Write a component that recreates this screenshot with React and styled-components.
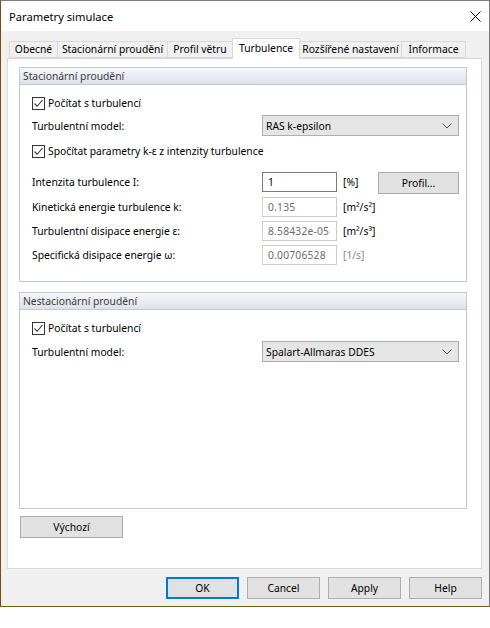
import React from 'react';
import styled, { createGlobalStyle } from 'styled-components';

const Global = createGlobalStyle`
  html, body { margin: 0; padding: 0; background: #ffffff; }
  body {
    font-family: "Noto Sans", "Liberation Sans", sans-serif;
    font-size: 10.3px;
    color: #000;
  }
  * { box-sizing: border-box; }
`;

const Window = styled.div`
  width: 490px;
  height: 607px;
  border: 1px solid #7d7d7d;
  border-left-color: #7a4b16;
  border-bottom-color: #6f5b1f;
  background: #f0f0f0;
  display: flex;
  flex-direction: column;
`;

const TitleBar = styled.div`
  height: 30px;
  background: #fff;
  display: flex;
  align-items: center;
  justify-content: space-between;
  padding-left: 8px;
  flex-shrink: 0;
`;

const Title = styled.span`
  font-size: 11.2px;
  color: #000;
`;

const CloseBtn = styled.div`
  width: 28px;
  height: 30px;
  display: flex;
  align-items: center;
  justify-content: center;
`;

const Body = styled.div`
  flex: 1;
  display: flex;
  flex-direction: column;
  padding: 7px 7px 0 6px;
`;

const TabStrip = styled.div`
  display: flex;
  align-items: flex-end;
  height: 20px;
  padding-left: 2px;
  position: relative;
  z-index: 1;
`;

const Tab = styled.div`
  width: ${p => p.$w}px;
  height: ${p => (p.$active ? 21 : 17)}px;
  margin-left: -1px;
  margin-bottom: ${p => (p.$active ? -1 : 0)}px;
  &:first-child { margin-left: 0; }
  border: 1px solid #d9d9d9;
  border-bottom: ${p => (p.$active ? 'none' : '1px solid #d9d9d9')};
  background: ${p => (p.$active ? '#fff' : '#f0f0f0')};
  display: flex;
  align-items: center;
  justify-content: center;
  padding-bottom: ${p => (p.$active ? 3 : 1)}px;
  white-space: nowrap;
  position: relative;
  z-index: ${p => (p.$active ? 2 : 1)};
`;

const Panel = styled.div`
  height: 511px;
  background: #fff;
  border: 1px solid #d9d9d9;
  padding: 8px 14px 0 11px;
  display: flex;
  flex-direction: column;
`;

const Group = styled.div`
  height: ${p => p.$h}px;
  margin-top: ${p => p.$mt || 0}px;
  border: 1px solid #c3c8d6;
  display: flex;
  flex-direction: column;
`;

const GroupHeader = styled.div`
  height: 17px;
  background: linear-gradient(#f6f7fa, #dde1ea);
  border-bottom: 1px solid #c3c8d6;
  padding-left: 3px;
  display: flex;
  align-items: center;
  color: #3c3c3c;
  white-space: nowrap;
`;

const GroupBody = styled.div`
  padding-left: 12px;
  display: flex;
  flex-direction: column;
`;

const Row = styled.div`
  display: flex;
  align-items: ${p => p.$align || 'center'};
  height: ${p => p.$h}px;
  margin-top: ${p => p.$mt}px;
  white-space: nowrap;
`;

const Label = styled.div`
  width: 230px;
  flex-shrink: 0;
  line-height: 20px;
  color: #000;
`;

const CheckWrap = styled.label`
  display: flex;
  align-items: center;
  gap: 3px;
  color: #000;
`;

const Box = styled.span`
  width: 13px;
  height: 13px;
  border: 1px solid #333;
  background: #fff;
  display: flex;
  align-items: center;
  justify-content: center;
`;

const Select = styled.div`
  width: 197px;
  height: 21px;
  background: #e5e5e5;
  border: 1px solid #adadad;
  display: flex;
  align-items: center;
  justify-content: space-between;
  padding: 0 6px 0 3px;
`;

const Input = styled.div`
  width: 75px;
  height: 20px;
  border: 1px solid ${p => (p.$disabled ? '#cccccc' : '#7a7a7a')};
  background: #fff;
  color: ${p => (p.$disabled ? '#6d6d6d' : '#000')};
  padding-left: 5px;
  display: flex;
  align-items: center;
  letter-spacing: ${p => (p.$disabled ? '0.2px' : '0')};
`;

const Unit = styled.div`
  margin-left: 6px;
  line-height: 20px;
  color: ${p => (p.$disabled ? '#8a8a8a' : '#000')};
  width: 35px;
`;

const Button = styled.div`
  width: ${p => p.$w}px;
  height: ${p => p.$h || 22}px;
  margin-left: ${p => p.$ml || 0}px;
  background: #e1e1e1;
  border: ${p => (p.$default ? '2px solid #0078d7' : '1px solid #adadad')};
  display: flex;
  align-items: center;
  justify-content: center;
  color: #000;
  flex-shrink: 0;
`;

const Footer = styled.div`
  display: flex;
  justify-content: flex-end;
  gap: 8px;
  margin-top: 8px;
`;

const Check = () => (
  <svg width="11" height="11" viewBox="0 0 11 11">
    <path d="M1.5 5.5 L4.2 8.3 L9.5 2" fill="none" stroke="#333" strokeWidth="1.1" />
  </svg>
);

const Chevron = () => (
  <svg width="10" height="6" viewBox="0 0 10 6">
    <path d="M0.5 0.5 L5 5 L9.5 0.5" fill="none" stroke="#555" strokeWidth="1" />
  </svg>
);

const CheckRow = ({ mt, children }) => (
  <Row $h={14} $mt={mt}>
    <CheckWrap>
      <Box><Check /></Box>
      {children}
    </CheckWrap>
  </Row>
);

const tabs = [
  ['Obecné', 49],
  ['Stacionární proudění', 111],
  ['Profil větru', 66],
  ['Turbulence', 68, true],
  ['Rozšířené nastavení', 103],
  ['Informace', 65],
];

export default function App() {
  return (
    <>
      <Global />
      <Window>
        <TitleBar>
          <Title>Parametry simulace</Title>
          <CloseBtn>
            <svg width="11" height="11" viewBox="0 0 11 11">
              <path d="M0.5 0.5 L10.5 10.5 M10.5 0.5 L0.5 10.5" stroke="#000" strokeWidth="1" />
            </svg>
          </CloseBtn>
        </TitleBar>
        <Body>
          <TabStrip>
            {tabs.map(([t, w, a]) => (
              <Tab key={t} $w={w} $active={a}>{t}</Tab>
            ))}
          </TabStrip>
          <Panel>
            <Group $h={215}>
              <GroupHeader>Stacionární proudění</GroupHeader>
              <GroupBody>
                <CheckRow mt={11}>Počítat s turbulencí</CheckRow>
                <Row $h={21} $mt={5}>
                  <Label>Turbulentní model:</Label>
                  <Select>RAS k-epsilon<Chevron /></Select>
                </Row>
                <CheckRow mt={8}>Spočítat parametry k-ε z intenzity turbulence</CheckRow>
                <Row $h={22} $mt={14} $align="flex-start">
                  <Label>Intenzita turbulence I:</Label>
                  <Input>1</Input>
                  <Unit>[%]</Unit>
                  <Button $w={81} $h={22}>Profil...</Button>
                </Row>
                <Row $h={20} $mt={3}>
                  <Label>Kinetická energie turbulence k:</Label>
                  <Input $disabled>0.135</Input>
                  <Unit>[m²/s²]</Unit>
                </Row>
                <Row $h={20} $mt={4}>
                  <Label>Turbulentní disipace energie ε:</Label>
                  <Input $disabled>8.58432e-05</Input>
                  <Unit>[m²/s³]</Unit>
                </Row>
                <Row $h={20} $mt={4}>
                  <Label>Specifická disipace energie ω:</Label>
                  <Input $disabled>0.00706528</Input>
                  <Unit $disabled>[1/s]</Unit>
                </Row>
              </GroupBody>
            </Group>
            <Group $h={217} $mt={10}>
              <GroupHeader>Nestacionární proudění</GroupHeader>
              <GroupBody>
                <CheckRow mt={11}>Počítat s turbulencí</CheckRow>
                <Row $h={21} $mt={6}>
                  <Label>Turbulentní model:</Label>
                  <Select>Spalart-Allmaras DDES<Chevron /></Select>
                </Row>
              </GroupBody>
            </Group>
            <Row $h={22} $mt={7}>
              <Button $w={103} $ml={1}>Výchozí</Button>
            </Row>
          </Panel>
          <Footer>
            <Button $w={73} $default>OK</Button>
            <Button $w={73}>Cancel</Button>
            <Button $w={73}>Apply</Button>
            <Button $w={73}>Help</Button>
          </Footer>
        </Body>
      </Window>
    </>
  );
}
